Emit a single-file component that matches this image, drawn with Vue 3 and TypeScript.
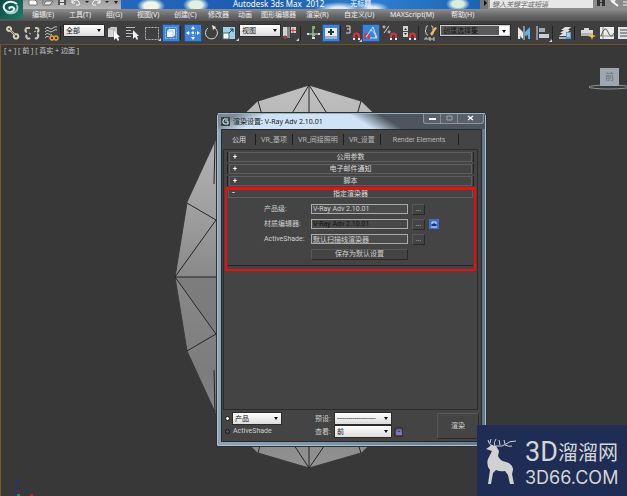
<script setup lang="ts">
import { ref } from 'vue'

interface Shape { d: string; fill?: string; stroke?: string; w?: number; dash?: string }
interface Tool { kind: 'icon' | 'sep' | 'select'; id: string; size: string; on?: boolean; label?: string; options?: string[] }

const menus: string[] = ['编辑(E)', '工具(T)', '组(G)', '视图(V)', '创建(C)', '修改器', '动画', '图形编辑器', '渲染(R)', '自定义(U)', 'MAXScript(M)', '帮助(H)']

const pale = '#d8d8d0'
const magnet: Shape[] = [
  { d: 'M10 15v-3a2 2 0 0 1 5 0v3', stroke: '#d8343c', w: 2 },
  { d: 'M9 15h2M14 15h2', stroke: '#eee', w: 2 },
]

const icons: Record<string, Shape[]> = {
  link: [
    { d: 'M5 3a2 2 0 1 0 .1 0M12 10a2.300 2.300 0 1 0 .1 0M7 7l4 4', stroke: '#d9d7b4', w: 2 },
    { d: 'M6 6l5 5', stroke: '#77755c', w: 1 },
  ],
  unlink: [
    { d: 'M7 4H5a2 2 0 0 0-1 4M12 4h1a2 2 0 0 1 1 4M4 11a2 2 0 0 0 3 3M14 10a2 2 0 0 1-2 4', stroke: '#c9c8b2', w: 2 },
    { d: 'M6 9l2 1M11 8l2-1', stroke: '#c9c8b2', w: 1 },
  ],
  bind: [
    { d: 'M3 5q2-3 4-1t4 0 4-1M3 8q2-3 4-1t4 0 4-1M3 11q2-3 4-1t3 0M3 14q2-3 4-1', stroke: '#bfc0c0', w: 1 },
    { d: 'M10 12a2 2 0 1 0 .1 0M14 12a2 2 0 1 0 .1 0', stroke: '#e6a52a', w: 1.5 },
  ],
  object: [
    { d: 'M4 5l3-2h6v7l-3 3H4z', fill: '#d5d7da' },
    { d: 'M4 5h6v8M10 5l3-2', stroke: '#a5a9ad', w: 1 },
    { d: 'M10 7v9l2-2 2 3 1-1-1-3h2z', fill: '#fff' },
  ],
  byname: [
    { d: 'M3 3.500h9M3 6.500h5M3 9.500h7M3 12.500h5', stroke: '#b9b9b9', w: 1 },
    { d: 'M10 6v9l2-2 2 3 1-1-1-3h2z', fill: '#eee' },
  ],
  region: [
    { d: 'M2.500 3.500h13v12h-13z', stroke: '#b4b4b4', w: 1, dash: '2 1' },
    { d: 'M18 14v3h-3z', fill: '#ccc' },
  ],
  window: [
    { d: 'M3.500 3.500h11v11h-11z', stroke: '#8cbef0', w: 1, dash: '2 1' },
    { d: 'M5 7l2-2h6v6l-2 2H5z', fill: '#f4f6f8' },
    { d: 'M5 7h6v6', stroke: '#b5c5d8', w: 1 },
  ],
  move: [
    { d: 'M9 2l2 3H7zM9 16l2-3H7zM2 9l3-2v4zM16 9l-3-2v4zM8 8h2v2H8z', fill: '#fff' },
    { d: 'M9 5v8M5 9h8', stroke: '#d4e8ff', w: 1, dash: '1 1' },
  ],
  rotate: [
    { d: 'M6 4a6 6 0 1 0 6-.5', stroke: '#d5d5d5', w: 1 },
    { d: 'M10 1l4 2-3 3z', fill: '#e5e5e5' },
  ],
  scale: [
    { d: 'M2 3h12v12H2z', fill: '#9ad1ea' },
    { d: 'M2 9h6v6H2z', fill: '#fff', stroke: '#486979', w: 1 },
    { d: 'M8 9l4-4M9 5h3v3', stroke: '#234', w: 1 },
    { d: 'M18 14v3h-3z', fill: '#ccc' },
  ],
  pivot: [
    { d: 'M2 3h4v9H2zM10 3h5v6h-5z', fill: '#d0d4d8' },
    { d: 'M6 3h3v11H6z', fill: '#808488' },
    { d: 'M4 11v4M2 13h4M12 4v5M10 6.500h5', stroke: '#d83a3a', w: 1 },
    { d: 'M18 14v3h-3z', fill: '#ccc' },
  ],
  manipulate: [
    { d: 'M9 4v10M4 10h11', stroke: '#d8d8d8', w: 1 },
    { d: 'M8 2h3v3H8z', fill: '#6cc24a' },
    { d: 'M3 9h2v2H3zM14 9h2v2h-2zM8 13h3v2H8z', fill: '#ddd' },
    { d: 'M8 9h3v3H8z', fill: '#8dbf72' },
  ],
  keyboard: [
    { d: 'M3 4h12v11H3z', fill: '#e8eaec' },
    { d: 'M3 12h12v3H3z', fill: '#9fb1c3' },
    { d: 'M9 5v6M6 8h6', stroke: '#263442', w: 2 },
  ],
  snap: [{ d: 'M2 2h4v3H3M6 5v4H2', stroke: pale, w: 1 }, ...magnet, { d: 'M18 15v3h-3z', fill: '#ccc' }],
  angle: [
    { d: 'M7 15v-3a2 2 0 0 0-4 0v3', stroke: '#e1323c', w: 2 },
    { d: 'M4 13l7-10 4 11H8M8 6q5 1 6 8', stroke: '#c2e4ff', w: 1 },
  ],
  percent: [
    { d: 'M3 2a1 1 0 1 0 .1 0M8 7a1 1 0 1 0 .1 0M8 2L3 9', stroke: pale, w: 1 }, ...magnet,
  ],
  spinner: [
    { d: 'M3 2h5v11H3z', fill: '#d3d3d0' },
    { d: 'M4 6l1.500-2L7 6zM4 9l1.500 2L7 9z', fill: '#333' },
    { d: 'M3 7.500h5', stroke: '#444', w: 1 }, ...magnet,
  ],
  sets: [
    { d: 'M6 2H5q-1 0-1 2v2l-1 1 1 1v2q0 1 2 1M9 2h1q1 0 1 2v2l1 1-1 1v2q0 1-2 1M3 16v-2h2v2M7 13v3h2v-2H7M13 14h-2v2h2', stroke: '#c8c8c2', w: 1 },
    { d: 'M8 10l5-7 2 1-5 7z', fill: '#f2c14a' },
  ],
  mirror: [
    { d: 'M3 3l5 5v7l-2-2v-2l-1 4H3z', fill: '#e4e6e8' },
    { d: 'M15 3l-5 5v4l3-1v4h2z', fill: '#5eb3e4' },
    { d: 'M9 2v14', stroke: '#ddd', w: 1 },
  ],
  align: [
    { d: 'M3 2v14', stroke: '#ddd', w: 1 },
    { d: 'M5 4h6v4H5z', fill: '#9dabb8' },
    { d: 'M5 10h10v4H5z', fill: '#c7d0d8' },
    { d: 'M18 15v3h-3z', fill: '#ccc' },
  ],
  layers: [
    { d: 'M5 6l4-3h6l-3 3zM4 9l4-3h6l-3 3zM3 12l4-3h6l-3 3z', fill: '#dcdfe2' },
    { d: 'M3 13h8v2H3z', fill: '#aab0b6' },
    { d: 'M10 8h5v7h-5z', fill: '#5b9ad0' },
    { d: 'M11 10h3M11 12h3', stroke: '#fff', w: 1 },
  ],
  ribbon: [
    { d: 'M2 6h3V4h5v2h4v6H2z', fill: '#d7dadd' },
    { d: 'M2 9h12v3H2z', fill: '#aeb4ba' },
    { d: 'M13 8l1 3 3 1-3 1-1 3-1-3-3-1 3-1z', fill: '#f5c243' },
  ],
  curve: [
    { d: 'M2 3h14v12H2z', fill: '#ececec' },
    { d: 'M5 3v12M2 12h14', stroke: '#888', w: 1 },
    { d: 'M3 12q4-12 7-4t6 1', stroke: '#555', w: 1 },
  ],
  schematic: [
    { d: 'M2 3h14v12H2z', fill: '#e0e3e5' },
    { d: 'M4 6h9M4 9h9M4 12h9', stroke: '#3d4650', w: 1 },
  ],
}

const tools: Tool[] = [
  { kind: 'icon', id: 'link', size: 'w18', label: '选择并链接' },
  { kind: 'icon', id: 'unlink', size: 'w20', label: '取消链接' },
  { kind: 'icon', id: 'bind', size: 'w18', label: '绑定' },
  { kind: 'sep', id: 's1', size: 'w4' },
  { kind: 'select', id: 'filter', size: 'w40', label: '选择过滤器', options: ['全部'] },
  { kind: 'icon', id: 'object', size: 'w18', label: '选择对象' },
  { kind: 'icon', id: 'byname', size: 'w20', label: '按名称选择' },
  { kind: 'icon', id: 'region', size: 'w20', label: '选择区域' },
  { kind: 'icon', id: 'window', size: 'w18', on: true, label: '窗口' },
  { kind: 'sep', id: 's2', size: 'w4' },
  { kind: 'icon', id: 'move', size: 'w18', on: true, label: '移动' },
  { kind: 'icon', id: 'rotate', size: 'w18', label: '旋转' },
  { kind: 'icon', id: 'scale', size: 'w20', label: '缩放' },
  { kind: 'select', id: 'coords', size: 'w40', label: '参考坐标系', options: ['视图'] },
  { kind: 'icon', id: 'pivot', size: 'w20', label: '轴点中心' },
  { kind: 'sep', id: 's3', size: 'w4' },
  { kind: 'icon', id: 'manipulate', size: 'w18', label: '操纵' },
  { kind: 'icon', id: 'keyboard', size: 'w18', on: true, label: '快捷键' },
  { kind: 'sep', id: 's4', size: 'w4' },
  { kind: 'icon', id: 'snap', size: 'w18', label: '捕捉' },
  { kind: 'icon', id: 'angle', size: 'w18', on: true, label: '角度捕捉' },
  { kind: 'icon', id: 'percent', size: 'w20', label: '百分比捕捉' },
  { kind: 'icon', id: 'spinner', size: 'w18', label: '微调器捕捉' },
  { kind: 'sep', id: 's5', size: 'w4' },
  { kind: 'icon', id: 'sets', size: 'w18', label: '编辑选择集' },
  { kind: 'select', id: 'named', size: 'w70', label: '命名选择集', options: ['创建选择集'] },
  { kind: 'sep', id: 's6', size: 'w4' },
  { kind: 'icon', id: 'mirror', size: 'w20', label: '镜像' },
  { kind: 'icon', id: 'align', size: 'w18', label: '对齐' },
  { kind: 'sep', id: 's7', size: 'w4' },
  { kind: 'icon', id: 'layers', size: 'w18', label: '层管理器' },
  { kind: 'sep', id: 's8', size: 'w4' },
  { kind: 'icon', id: 'ribbon', size: 'w20', label: '石墨工具' },
  { kind: 'icon', id: 'curve', size: 'w18', label: '曲线编辑器' },
  { kind: 'icon', id: 'schematic', size: 'w18', label: '图解视图' },
]

const tabs: string[] = ['公用', 'VR_基项', 'VR_间接照明', 'VR_设置', 'Render Elements']
const rollups: string[] = ['公用参数', '电子邮件通知', '脚本']
const renderers = ref([
  { id: 'production', label: '产品级:', value: 'V-Ray Adv 2.10.01', locked: false },
  { id: 'material', label: '材质编辑器:', value: 'V-Ray Adv 2.10.01', locked: true },
  { id: 'shade', label: 'ActiveShade:', value: '默认扫描线渲染器', locked: false },
])
const mode = ref('product')
</script>

<template>
  <div class="app">
    <header class="titlebar">
      <div class="quick">
        <svg width="94" height="9" viewBox="0 0 94 9" aria-hidden="true">
          <path d="M3 0h6l2 2v3H3z" fill="#fff" stroke="#777" />
          <path d="M17 0v5h7l3-4h-7l-2 3" fill="#e8e8e8" stroke="#666" />
          <path d="M32 0h8v5h-8z" fill="#555" /><path d="M34 0h4v2h-4zM34 3h4v2h-4z" fill="#ddd" />
          <path d="M46 2q5-4 7 0t-3 3M46 0v3h3M74 2q-5-4-7 0t3 3M74 0v3h-3" fill="none" stroke="#fff" />
          <path d="M59 1h4l-2 2zM79 1h4l-2 2zM88 1h4l-2 3z" fill="#222" />
        </svg>
      </div>
      <div class="caption"><span>Autodesk 3ds Max&nbsp; 2012</span><span>无标题</span></div>
      <div class="search">
        <i class="tri"></i>
        <input type="text" aria-label="搜索" placeholder="键入关键字或短语" />
        <svg width="34" height="9" viewBox="0 0 34 9" aria-hidden="true">
          <path d="M4 0v6h3V3h2v3h3V0h-3v2H7V0z" fill="#333" />
          <path d="M18 0l2 2 2-2M20 2l5 4" fill="none" stroke="#f4f4f4" stroke-width="2" />
          <path d="M30 2h4M30 5h4" stroke="#eee" />
        </svg>
      </div>
    </header>
    <button class="logo" aria-label="应用程序">
      <svg width="23" height="19" viewBox="0 0 23 19">
        <path d="M17 4Q12 0 6 3 2 6 5 10q4 4 8 1 3-3-1-4-4 0-2 2" fill="none" stroke="#e9f5f0" stroke-width="2" />
        <path d="M17 5q2 6-4 8-4 1-7-1" fill="none" stroke="#9fd0c2" stroke-width="2" />
      </svg>
    </button>

    <nav class="menubar">
      <a v-for="m in menus" :key="m" href="#">{{ m }}</a>
    </nav>

    <div class="toolbar">
      <template v-for="t in tools" :key="t.id">
        <i v-if="t.kind === 'sep'" class="sep"></i>
        <label v-else-if="t.kind === 'select'" class="drop" :class="[t.size, t.id]">
          <select :aria-label="t.label"><option v-for="o in t.options" :key="o">{{ o }}</option></select>
        </label>
        <button v-else class="tool" :class="[t.size, { on: t.on }]" :aria-label="t.label">
          <svg width="18" height="18" viewBox="0 0 18 18">
            <path v-for="(s, i) in icons[t.id]" :key="i" :d="s.d" :fill="s.fill ?? 'none'" :stroke="s.stroke ?? 'none'" :stroke-width="s.w" :stroke-dasharray="s.dash" />
          </svg>
        </button>
      </template>
    </div>

    <main class="viewport">
      <svg class="scene" width="100%" height="100%" aria-hidden="true">
        <defs>
          <linearGradient id="ball" x1="0" y1="0" x2="0" y2="1">
            <stop offset="0" stop-color="#c0c0c0" />
            <stop offset="0.300" stop-color="#a2a3a2" />
            <stop offset="0.500" stop-color="#898989" />
            <stop offset="0.750" stop-color="#7c7c7c" />
            <stop offset="1" stop-color="#929292" />
          </linearGradient>
        </defs>
        <g transform="translate(-1 -45)">
          <path d="M309 85l52 16 42 41 29 61 12 74-12 74-29 61-42 41-52 15-51-15-43-41-28-61-12-74 12-74 28-61 43-41z" fill="url(#ball)" />
          <path d="M175 277h45v60z" fill="#777" opacity="0.700" />
          <path d="M187 203l-12 74 12 74 28 61M258 101l51-16 52 16M258 453l51 15 52-15" fill="none" stroke="#3a3a3a" />
          <path d="M309 85v30M309 85l-18 30M309 85l19 30M258 101l4 14M361 101l-4 14M187 203l29 17-41 57h45M175 277l41 57-29 17M215 142l-1 42M215 412l-1-42M309 468v-26M309 468l-17-26M309 468l18-26M258 453l3-12M361 453l-4-12" fill="none" stroke="#252525" />
        </g>
        <g transform="translate(-1 -45)">
          <ellipse cx="609" cy="87" rx="20" ry="2" fill="#343a3e" stroke="#8f9496" />
          <path d="M600 68h19v18h-19z" fill="#a0a6ad" />
          <text x="605" y="80" class="cube">前</text>
          <path d="M16 496v-10" stroke="#2b2b9c" stroke-width="1" />
          <path d="M16 480h3M18 480v3M16 483h3" stroke="#29299a" />
          <path d="M17 495h3" stroke="#2c8c3a" stroke-width="2" />
          <path d="M30 495h3" stroke="#b22" stroke-width="2" />
        </g>
      </svg>
      <p class="vlabel">[ + ] [ 前 ] [ 真实 + 边面 ]</p>
    </main>

    <section class="dialog" role="dialog" aria-labelledby="dlg-title">
      <div class="dtitle">
        <svg width="9" height="9" viewBox="0 0 9 9" aria-hidden="true">
          <path d="M0 0h9v9H0z" fill="#34464e" />
          <path d="M7 2H3L2 4v2l2 1h3V4H4" fill="none" stroke="#e8f2f2" />
        </svg>
        <h1 id="dlg-title">渲染设置: V-Ray Adv 2.10.01</h1>
        <div class="winbtns">
          <button aria-label="最小化"><svg width="9" height="8"><path d="M1 5h7" stroke="#fff" stroke-width="2" /></svg></button>
          <button aria-label="最大化"><svg width="9" height="8"><path d="M2 2h5v4H2z" fill="none" stroke="#9da5ac" /></svg></button>
          <button aria-label="关闭"><svg width="9" height="8"><path d="M2 2l5 4M7 2L2 6" stroke="#fff" stroke-width="1.500" /></svg></button>
        </div>
      </div>
      <div class="dbody">
        <div class="tabs" role="tablist">
          <button v-for="(t, i) in tabs" :key="t" role="tab" :aria-selected="i === 0">{{ t }}</button>
        </div>
        <div class="panel">
          <div v-for="r in rollups" :key="r" class="roll"><button><b>+</b>{{ r }}</button></div>
          <div class="assign">
            <button class="head"><b>-</b>指定渲染器</button>
            <div class="fields">
              <template v-for="r in renderers" :key="r.id">
                <label :for="r.id">{{ r.label }}</label>
                <input :id="r.id" v-model="r.value" type="text" :class="{ locked: r.locked }" readonly />
                <button class="more" :aria-label="'选择 ' + r.label">...</button>
                <button v-if="r.locked" class="lock" aria-label="锁定">
                  <svg width="8" height="8" viewBox="0 0 8 8"><path d="M2 4V2h4v2M1 7h6" fill="none" stroke="#dfe9ff" /><path d="M2 4h4v2H2z" fill="#24307c" /></svg>
                </button>
                <i v-else></i>
              </template>
              <button class="save">保存为默认设置</button>
            </div>
          </div>
        </div>
        <div class="foot">
          <div class="modes">
            <input id="m1" v-model="mode" type="radio" value="product" aria-label="产品" />
            <label class="drop"><select aria-label="渲染模式"><option>产品</option></select></label>
            <input id="m2" v-model="mode" type="radio" value="shade" />
            <label for="m2">ActiveShade</label>
          </div>
          <div class="presets">
            <label for="preset">预设:</label>
            <div class="drop"><select id="preset"><option>--------------------</option></select></div>
            <i></i>
            <label for="view">查看:</label>
            <div class="drop"><select id="view"><option>前</option></select></div>
            <button class="vlock" aria-label="锁定视图">
              <svg width="8" height="8" viewBox="0 0 8 8"><path d="M2 4V2h4v2" fill="none" stroke="#8d8ddd" /><path d="M1 4h6v3H1z" fill="#7777cc" /></svg>
            </button>
          </div>
          <button class="render">渲染</button>
        </div>
      </div>
    </section>

    <aside class="brand">
      <svg width="34" height="46" viewBox="0 0 34 46" aria-hidden="true">
        <path d="M1 10l3-2 2-2 5 1 3 5-1 5q2 5 8 6 7 2 7 8l-1 4 2 10h-4l-2-9-3-4q-5 1-9-1l-3 3-2 11H3l2-14q-4-5-2-11l4-8z" fill="#d0d1d3" />
        <path d="M8 7Q3 5 3 1M5 4L6 0M10 7Q8 4 11 0M11 7q7 1 10-2t10-3M15 6l-1-5M20 5l-1-4M20 6q4 2 7 1" fill="none" stroke="#d0d1d3" stroke-width="1" />
      </svg>
      <div class="words">
        <p class="name"><span>3D</span>溜溜网</p>
        <p class="site">3D66.COM</p>
      </div>
    </aside>
  </div>
</template>

<style>
body { background: #383838; }
</style>

<style scoped>
* { box-sizing: border-box; margin: 0; }
.app {
  position: relative;
  display: flex;
  flex-direction: column;
  min-height: 100vh;
  overflow: hidden;
  background: #383838;
  color: #d2d2d2;
  font: 7px/10px "Noto Sans", "Noto Sans CJK SC", sans-serif;
}
button, input, select { font: inherit; color: inherit; border: 0; padding: 0; border-radius: 0; background: none; }
button svg { display: block; }
a { color: inherit; text-decoration: none; }

.titlebar { display: flex; height: 9px; background: #a9a9a9; }
.quick { flex: 0 0 121px; padding-left: 26px; background: linear-gradient(#9d9d9d, #b4b4b4); }
.quick svg, .search svg { display: block; }
.caption {
  flex: 1;
  display: flex;
  gap: 26px;
  padding-left: 112px;
  color: #fff;
  font-size: 7px;
  line-height: 8px;
  white-space: nowrap;
  background:
    radial-gradient(ellipse 14px 8px at 30px 6px, #eef6ec 50%, transparent),
    radial-gradient(ellipse 13px 8px at 75px 5px, #dff0e4 50%, transparent),
    radial-gradient(ellipse 24px 7px at 218px 9px, #dfeaf5 30%, transparent),
    radial-gradient(ellipse 16px 7px at 252px 9px, #dceaf5 30%, transparent),
    radial-gradient(ellipse 12px 7px at 337px 4px, #d9eede 50%, transparent),
    linear-gradient(90deg, #2468bd, #1a5bb0 40%, #2f80cf 70%, #1c63b8);
}
.caption span:first-child { font-size: 8px; }
.search { flex: 0 0 147px; display: flex; background: #8b8b8b; }
.tri { width: 10px; height: 9px; background: #777; border-right: 2px solid #999; }
.tri::before { content: ""; display: block; margin-left: 4px; border: 3px solid transparent; border-left-color: #111; border-right: 0; }
.search input { width: 103px; height: 8px; padding-left: 2px; background: #e7e7e7; font-style: italic; font-size: 7px; line-height: 7px; }
.search input::placeholder { color: #666; }
.logo { position: absolute; left: 0; top: 0; z-index: 2; width: 23px; height: 19px; background: linear-gradient(135deg, #0b4a45, #1c7c68); }

.menubar {
  display: grid;
  grid-template-columns: 37px 37px 31px 37px 34px 30px 23px 45px 38px 46px 61px auto;
  height: 12px;
  padding: 1px 0 0 32px;
  background: linear-gradient(#8e8e8e, #6a6a6a 50%, #525252);
  color: #eee;
  white-space: nowrap;
}
.toolbar { display: flex; align-items: center; height: 23px; padding-left: 4px; background: #3f3f3f; overflow: hidden; }
.toolbar > * { flex-shrink: 0; }
.w18 { width: 18px; } .w20 { width: 20px; } .w40 { width: 40px; } .w70 { width: 70px; }
.sep { width: 4px; height: 14px; border-left: 1px solid #222; }
.tool { display: flex; justify-content: center; height: 18px; }
.tool.on { background: #3c82d8; box-shadow: inset 0 0 0 1px #2a4f80; }

.drop { position: relative; display: block; height: 11px; background: linear-gradient(#fff, #dcdcdc); color: #111; box-shadow: 0 0 0 1px #2c2c2c; }
.drop select { display: block; appearance: none; width: 100%; height: 100%; padding: 0 9px 0 2px; line-height: 10px; text-overflow: clip; }
.drop::after { content: ""; position: absolute; right: 3px; top: 4px; border: 2px solid transparent; border-top: 3px solid #111; border-bottom: 0; pointer-events: none; }
.drop.named { background: linear-gradient(90deg, #5a5a5a 58px, #fff 58px); border: 1px solid #ccc; }
.drop.named select { line-height: 9px; }
.toolbar .drop { margin-bottom: 4px; }

.viewport { position: relative; flex: 1; border-left: 1px solid #7a5c20; border-top: 1px solid #6a5226; }
.scene { position: absolute; inset: 0; }
.cube { fill: #66707a; font-size: 9px; }
.vlabel { position: relative; padding: 1px 0 0 3px; color: #c8c8c8; }

.dialog {
  position: absolute;
  left: 216px;
  top: 112px;
  width: 271px;
  padding: 0 4px 4px;
  border: 1px solid #27323a;
  border-radius: 4px 4px 2px 2px;
  background: linear-gradient(90deg, #8fa4b5, #7e95a8 40%, #65798a);
  box-shadow: inset 0 0 0 1px #a9bfce;
}
.dtitle {
  display: flex;
  align-items: center;
  height: 16px;
  margin: 0 -3px;
  padding-left: 3px;
  gap: 3px;
  border-top: 1px solid #9fb0bd;
  background:
    linear-gradient(148deg, #7b8894 0 10px, transparent 26px),
    linear-gradient(32deg, #cfe3f7 0 82px, #4d565f 98px);
}
.dtitle h1 { flex: 1; color: #141c24; font-size: 7px; font-weight: 400; white-space: nowrap; }
.winbtns { align-self: flex-start; display: flex; height: 10px; margin-right: 1px; border: 1px solid #8d959c; border-top: 0; border-radius: 0 0 3px 3px; background: #59616a; }
.winbtns button { display: flex; justify-content: center; width: 17px; border-right: 1px solid #858d94; }
.winbtns button:last-child { width: 25px; border-right: 0; }
.dbody { background: #444; border: 1px solid #252a2e; color: #cfcfcf; font-family: Roboto, "Noto Sans CJK SC", sans-serif; }
.tabs { display: flex; height: 18px; margin: 0 4px; padding-top: 4px; }
.tabs button { height: 11px; padding: 0 5px; border-right: 1px solid #1e1e1e; white-space: nowrap; color: #b8b8b8; }
.tabs button:first-child { padding: 0 9px 0 6px; color: #ddd; }
.tabs button:last-child { padding: 0 13px 0 12px; }
.panel { display: flex; flex-direction: column; gap: 2px; height: 261px; margin: 1px 3px 0 1px; padding: 2px 3px; border: 1px solid #2c2c2c; }
.roll { border: 1px solid #222; border-top: 0; border-bottom: 0; padding: 0 1px; }
.roll button, .head { position: relative; display: block; width: 100%; height: 10px; border: 1px solid #5e5e5e; line-height: 8px; color: #ddd; text-align: center; }
.roll b, .head b { position: absolute; left: 3px; top: 0; color: #fff; }
.assign { margin: -1px -2px 0; padding: 0 1px 3px; border: 2px solid #f00c0c; border-top-width: 3px; }
.head { height: 8px; border-top: 0; line-height: 6px; }
.fields {
  display: grid;
  grid-template-columns: 43px 97px 13px 10px;
  grid-auto-rows: 10px;
  gap: 5px 4px;
  align-items: center;
  padding: 6px 0 6px 36px;
  border-bottom: 1px solid #222;
}
.fields label { white-space: nowrap; }
.fields input { width: 97px; height: 10px; border: 1px solid #aaa; padding: 0 1px; background: #4c4c4c; line-height: 8px; }
.fields input.locked { color: #111; background: #484848; }
.more, .save, .render { border: 1px solid #2a2a2a; border-top-color: #585858; border-left-color: #585858; }
.more { width: 13px; height: 11px; line-height: 7px; }
.lock { width: 10px; height: 10px; padding: 1px; background: #3d70c8; }
.save { grid-column: 2; width: 97px; height: 11px; line-height: 9px; }
.foot { display: flex; align-items: flex-start; justify-content: space-between; padding: 3px 2px 2px 3px; }
.modes { display: grid; grid-template-columns: 5px 48px; gap: 2px 3px; align-items: center; }
.modes input { appearance: none; width: 5px; height: 5px; margin: 0; border: 1px solid #151515; border-radius: 50%; background: #555; }
.modes input:checked { background: #fff; }
.presets { display: grid; grid-template-columns: 17px 56px 9px; gap: 2px 3px; align-items: center; white-space: nowrap; }
.vlock { height: 10px; border: 1px solid #333; }
.render { width: 42px; height: 26px; }

.brand { position: absolute; right: 0; bottom: 0; display: flex; gap: 6px; width: 150px; height: 71px; padding: 14px 0 0 8px; background: #1f2d55; color: #d4d5d7; }
.words { display: flex; flex-direction: column; gap: 4px; white-space: nowrap; }
.name { display: flex; align-items: center; height: 26px; font: 20px/26px "Noto Sans CJK SC", sans-serif; }
.name span { font: 27px/26px Roboto, sans-serif; }
.site { font: 18px/18px Inter, sans-serif; }
</style>
